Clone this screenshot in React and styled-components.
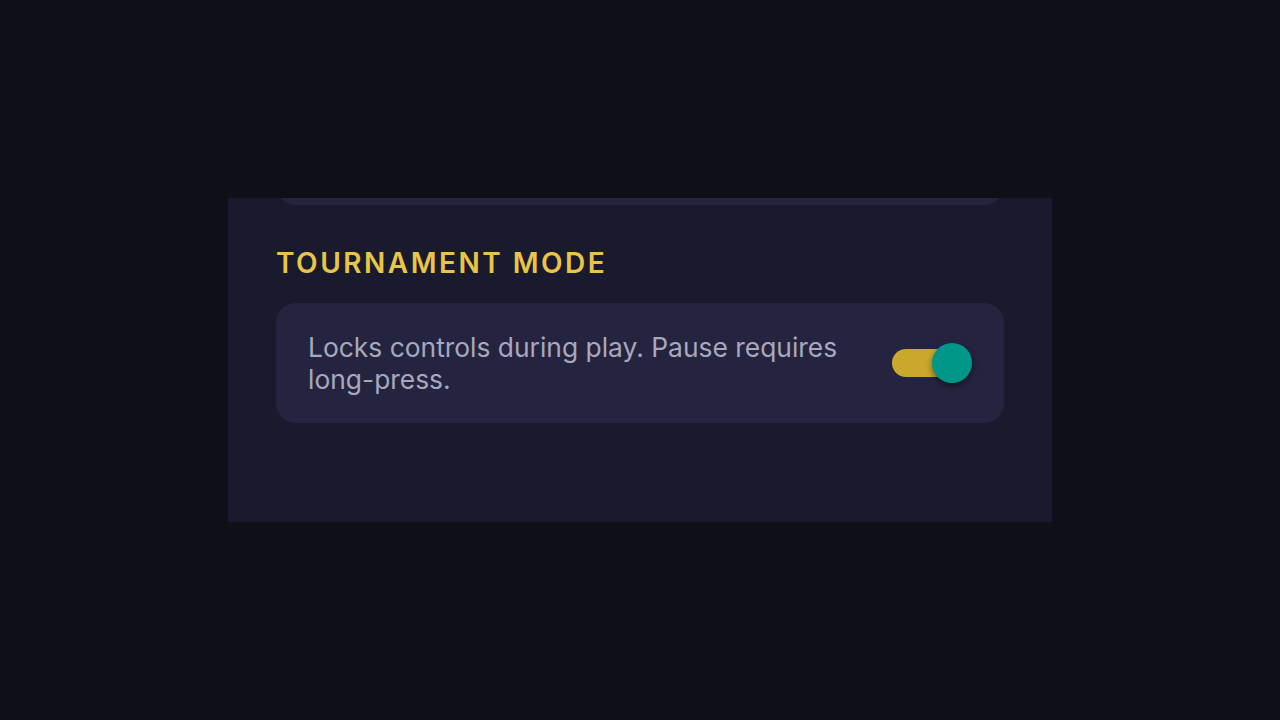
import React, { useState } from "react";
import styled, { createGlobalStyle } from "styled-components";

const GlobalStyle = createGlobalStyle`
  html, body {
    margin: 0;
    padding: 0;
    background: #0f0f18;
  }
  body {
    font-family: Inter, "Noto Sans", "Liberation Sans", sans-serif;
  }
`;

const Page = styled.div`
  width: 1280px;
  height: 720px;
  display: flex;
  align-items: center;
  justify-content: center;
  background: #0f0f18;
`;

const Panel = styled.div`
  width: 824px;
  height: 324px;
  background: #1a1a2e;
  overflow: hidden;
  padding: 0 48px 99px;
  box-sizing: border-box;
  display: flex;
  flex-direction: column;
`;

const PrevCard = styled.div`
  flex: none;
  height: 80px;
  margin-top: -73px;
  border-radius: 20px;
  background: #252440;
`;

const Section = styled.section`
  margin-top: 41px;
  display: flex;
  flex-direction: column;
  gap: 23px;
`;

const Title = styled.h2`
  margin: 0;
  font-size: 28px;
  line-height: 34px;
  font-weight: 600;
  letter-spacing: 2.5px;
  color: #e8c547;
  text-transform: uppercase;
`;

const Card = styled.div`
  display: flex;
  align-items: center;
  justify-content: space-between;
  gap: 24px;
  padding: 28px 32px;
  border-radius: 20px;
  background: #252440;
`;

const Description = styled.p`
  margin: 0;
  max-width: 545px;
  font-size: 26.4px;
  line-height: 32px;
  color: #a8a8bc;
`;

const Switch = styled.button`
  position: relative;
  flex: none;
  width: 80px;
  height: 40px;
  padding: 0;
  border: 0;
  background: transparent;
  cursor: pointer;
`;

const Track = styled.span`
  position: absolute;
  left: 0;
  top: 6px;
  width: 64px;
  height: 28px;
  border-radius: 14px;
  background: ${(p) => (p.$on ? "#c9a82c" : "#44435e")};
`;

const Thumb = styled.span`
  position: absolute;
  top: 0;
  left: ${(p) => (p.$on ? "40px" : "0")};
  width: 40px;
  height: 40px;
  border-radius: 50%;
  background: ${(p) => (p.$on ? "#009688" : "#8a8aa0")};
  box-shadow: 0 3px 6px rgba(0, 0, 0, 0.45);
  transition: left 0.15s ease;
`;

export default function App() {
  const [on, setOn] = useState(true);
  return (
    <Page>
      <GlobalStyle />
      <Panel>
        <PrevCard />
        <Section>
          <Title>Tournament Mode</Title>
          <Card>
            <Description>
              Locks controls during play. Pause requires long-press.
            </Description>
            <Switch
              role="switch"
              aria-checked={on}
              aria-label="Tournament mode"
              onClick={() => setOn(!on)}
            >
              <Track $on={on} />
              <Thumb $on={on} />
            </Switch>
          </Card>
        </Section>
      </Panel>
    </Page>
  );
}
